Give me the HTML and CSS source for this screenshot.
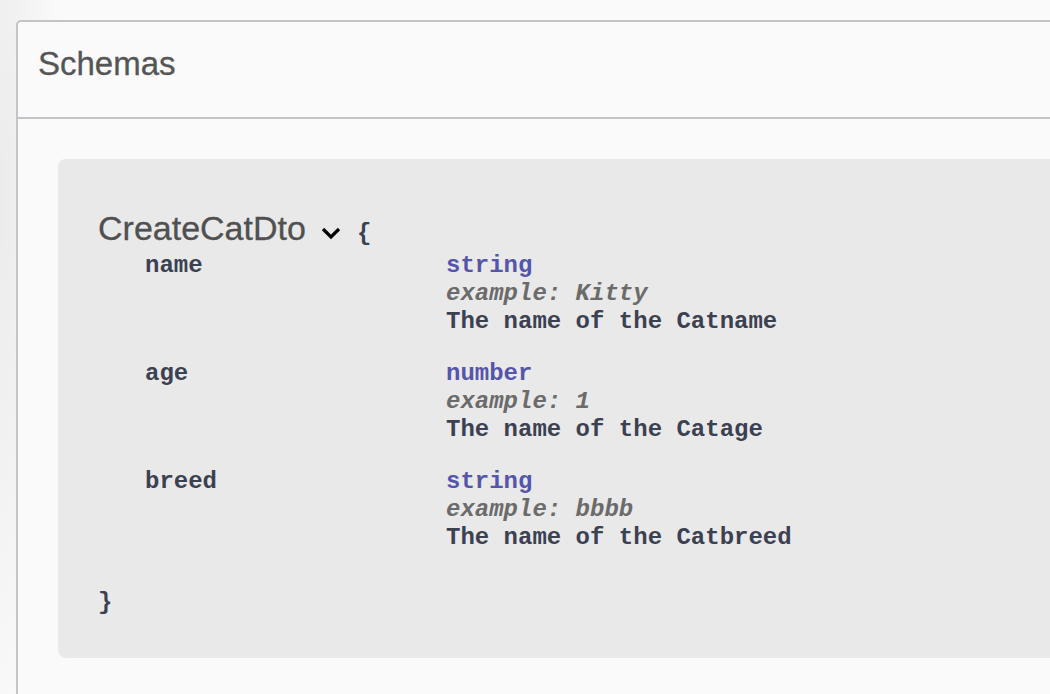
FILE: index.html
```html
<!DOCTYPE html>
<html lang="en">
<head>
  <meta charset="UTF-8" />
  <meta name="viewport" content="width=device-width, initial-scale=1.0"/>
  <title>Schemas</title>
  <link rel="stylesheet" href="styles.css">
</head>
<body>
  <section class="models">
    <h4 class="models-title">Schemas</h4>
    <div class="models-body">
      <div class="model-box">
        <div class="model-head">
          <span class="model-title">CreateCatDto</span>
          <svg class="arrow" width="20" height="14" viewBox="0 0 20 14">
            <polyline points="2,3 10,11 18,3" fill="none" stroke="#000" stroke-width="3.2"/>
          </svg>
          <span class="brace">{</span>
        </div>
        <div class="props">
          <div class="prop">
            <div class="prop-name">name</div>
            <div class="prop-info">
              <div class="prop-type">string</div>
              <div class="prop-example">example: Kitty</div>
              <div class="prop-desc">The name of the Catname</div>
            </div>
          </div>
          <div class="prop">
            <div class="prop-name">age</div>
            <div class="prop-info">
              <div class="prop-type">number</div>
              <div class="prop-example">example: 1</div>
              <div class="prop-desc">The name of the Catage</div>
            </div>
          </div>
          <div class="prop">
            <div class="prop-name">breed</div>
            <div class="prop-info">
              <div class="prop-type">string</div>
              <div class="prop-example">example: bbbb</div>
              <div class="prop-desc">The name of the Catbreed</div>
            </div>
          </div>
        </div>
        <div class="brace brace-close">}</div>
      </div>
    </div>
  </section>
</body>
</html>
```

FILE: styles.css
```css
body {
  margin: 0;
  padding: 0;
  height: 100vh;
  overflow: hidden;
  background: radial-gradient(60px 560px at 0 200px, #ebebeb, rgba(250, 250, 250, 0)), #fafafa;
  font-family: 'Liberation Sans', Arial, sans-serif;
}
.models {
  margin: 20px -80px 0 16px;
  border: 2px solid #c4c4c8;
  border-radius: 5px;
  background-color: #fafafa;
  min-height: 800px;
}
.models-title {
  margin: 0;
  padding: 24px 20px 35px;
  font-size: 33px;
  line-height: 36px;
  font-weight: normal;
  color: #555;
  -webkit-text-stroke: 0.3px #555;
  border-bottom: 2px solid #c4c4c8;
}
.models-body {
  padding: 40px;
}
.model-box {
  background-color: #e9e9e9;
  border-radius: 8px;
  padding: 49px 40px 41px;
  font-family: 'Liberation Mono', 'Courier New', monospace;
  font-size: 24px;
  line-height: 28px;
  font-weight: bold;
  color: #3b4151;
}
.model-head {
  display: flex;
  align-items: baseline;
  height: 40px;
}
.model-title {
  font-family: 'Liberation Sans', Arial, sans-serif;
  font-size: 34px;
  line-height: 40px;
  font-weight: normal;
  color: #505050;
  -webkit-text-stroke: 0.3px #505050;
}
.arrow {
  margin: 0 16px 1px 15px;
}
.brace {
  line-height: 28px;
}
.props {
  margin: 4px 0 0 47px;
  display: flex;
  flex-direction: column;
  gap: 24px;
}
.prop {
  display: grid;
  grid-template-columns: 301px auto;
}
.prop-type { color: #55a; }
.prop-example {
  color: #6b6b6b;
  font-style: italic;
}
.brace-close {
  margin-top: 37px;
}
```
